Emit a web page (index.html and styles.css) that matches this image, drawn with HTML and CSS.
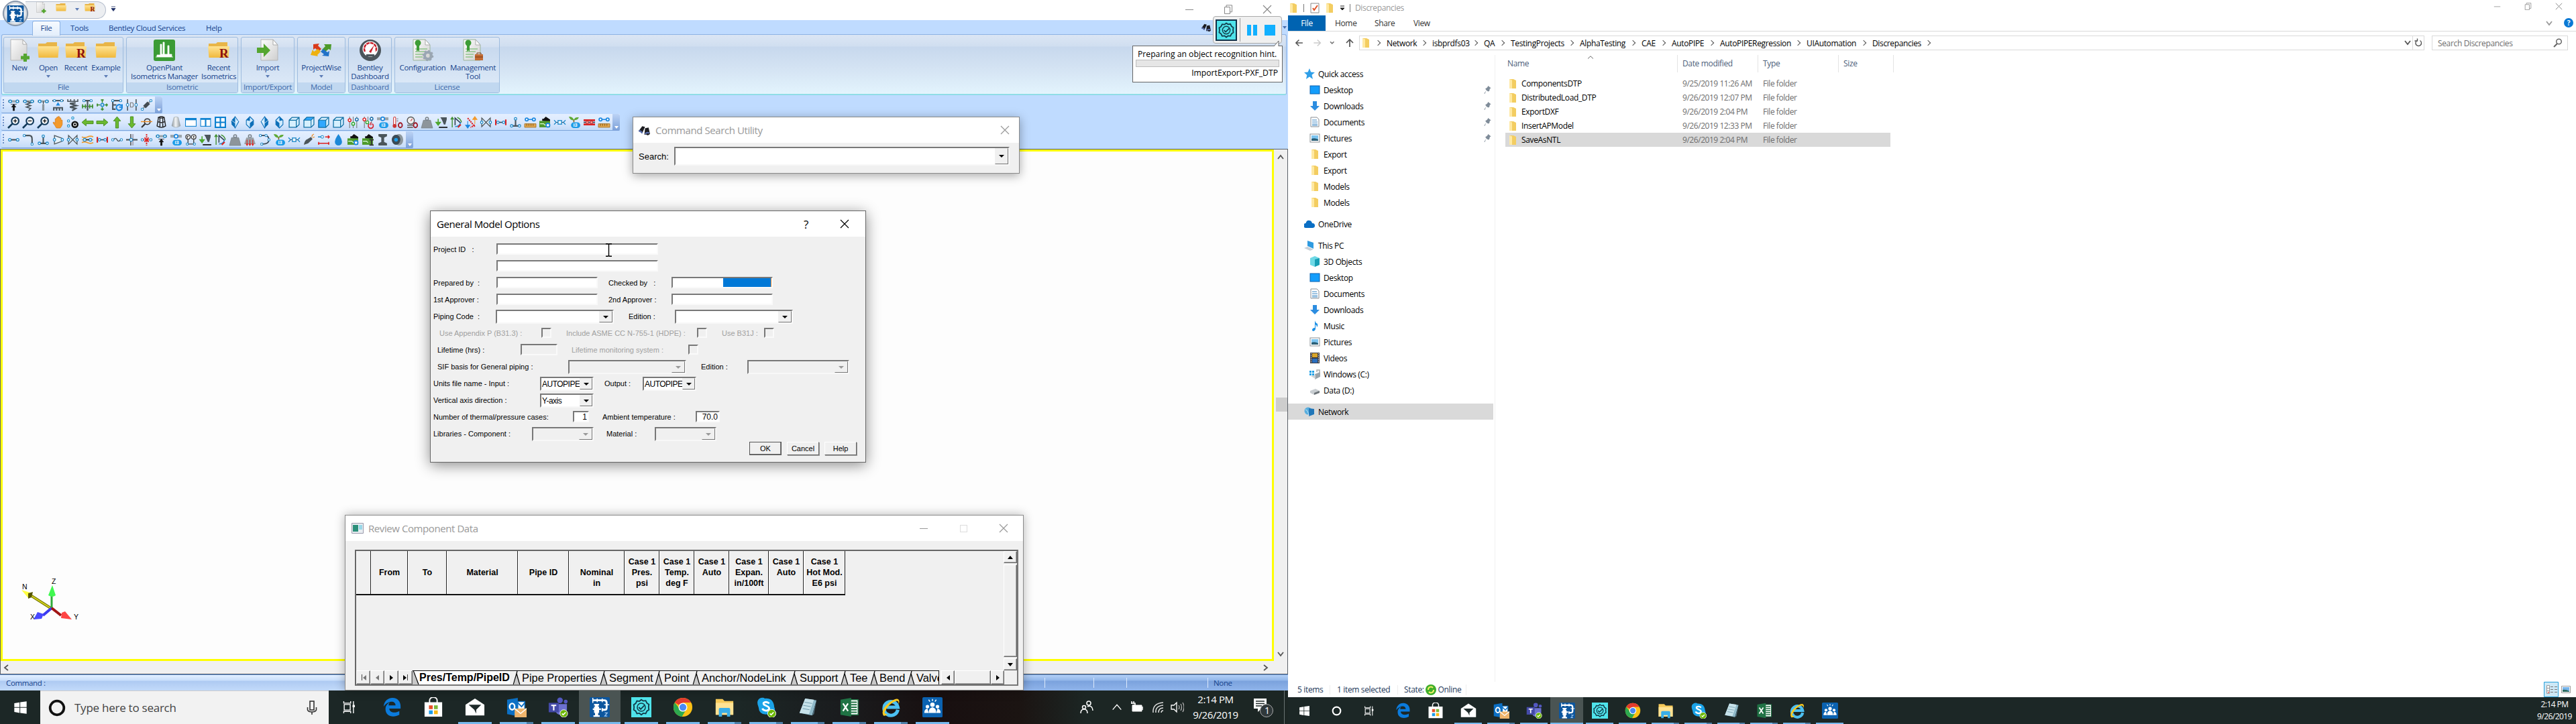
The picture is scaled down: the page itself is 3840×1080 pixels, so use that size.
FILE: index.html
```html
<!DOCTYPE html>
<html lang="en">
<head>
<meta charset="utf-8">
<title>Desktop</title>
<link rel="stylesheet" href="styles.css">
</head>
<body>
<svg class="defs" aria-hidden="true">
<defs>
<linearGradient id="g-folder" x1="0" y1="0" x2="0" y2="1"><stop offset="0" stop-color="#ffe394"/><stop offset="1" stop-color="#f0b93c"/></linearGradient>
<linearGradient id="g-page" x1="0" y1="0" x2="1" y2="1"><stop offset="0" stop-color="#fdfdfd"/><stop offset="1" stop-color="#cfcfcf"/></linearGradient>
<linearGradient id="g-cyl"><stop offset="0" stop-color="#8d979d"/><stop offset=".45" stop-color="#f4f6f7"/><stop offset="1" stop-color="#8d979d"/></linearGradient>
<radialGradient id="g-ring"><stop offset=".7" stop-color="#fff"/><stop offset=".9" stop-color="#c8ced6"/><stop offset="1" stop-color="#6f7f95"/></radialGradient>
</defs>
<!-- ribbon, 32 grid -->
<symbol id="page-new" viewBox="0 0 32 32"><path d="M3 0h18l6 7v24H3z" fill="url(#g-page)" stroke="#b5b5b5"/><path d="M21 0v7h6z" fill="#fff" stroke="#aaa"/><path d="M22 21h5v3.500h4v5h-4V33h-5v-3.500h-4v-5h4z" fill="#55a630"/></symbol>
<symbol id="folder" viewBox="0 0 32 32"><path d="M1 6h11l2-2h15v8H1z" fill="#e8b548"/><path d="M0 10h32l-1.500 17h-29z" fill="url(#g-folder)"/></symbol>
<symbol id="folder-r" viewBox="0 0 32 32"><path d="M1 6h11l2-2h15v8H1z" fill="#e8b548"/><path d="M0 10h32l-1.500 17h-29z" fill="url(#g-folder)"/><text x="17" y="27" font-family="Liberation Serif,serif" font-weight="bold" font-size="19" fill="#8b1010">R</text></symbol>
<symbol id="openplant" viewBox="0 0 32 32"><rect width="32" height="32" rx="3" fill="#3b9b35"/><path d="M3 26h26M5 26v-3h5V7h2v15h2V4h2v18h5V9h2v13h4v4" fill="#fff" stroke="#fff" stroke-width=".8"/></symbol>
<symbol id="import" viewBox="0 0 32 32"><path d="M6 0h18l7 8v23H6z" fill="url(#g-page)" stroke="#b5b5b5"/><path d="M24 0v8h7z" fill="#fff" stroke="#aaa"/><path d="M0 12h10V6l10 10-10 10v-6H0z" fill="#55a630"/></symbol>
<symbol id="projectwise" viewBox="0 0 32 32"><path d="M4 7l9-1-2 3 5 5-4 4-5-5-3 2z" fill="#d93a1b"/><path d="M31 7l-1 9-3-2-6 5-4-4 5-5-2-3z" fill="#4c9a2a"/><path d="M0 23l3-8 2 3 6-4 4 4-5 5 1 2z" fill="#eeb111"/><path d="M27 25l-10-1 3-2-5-4 4-4 6 5 3-2z" fill="#2172c8"/></symbol>
<symbol id="dash" viewBox="0 0 32 32"><circle cx="16" cy="16" r="16" fill="#4b555b"/><circle cx="16" cy="14" r="11.500" fill="#fff"/><path d="M8 18a9 9 0 1 1 16 0" fill="none" stroke="#c8202a" stroke-width="2.500" stroke-dasharray="5 1"/><path d="M14 18L22 8l-5 12z" fill="#c8202a"/><path d="M10 22h12v3H10z" fill="#4b555b"/></symbol>
<symbol id="license-cfg" viewBox="0 0 32 32"><path d="M2 0h18l7 8v23H2z" fill="url(#g-page)" stroke="#9bb59b"/><path d="M20 0v8h7z" fill="#fff" stroke="#aaa"/><path d="M5 14h18M5 18h15M5 22h12M5 26h11" stroke="#8fc48a" stroke-width="1.500"/><circle cx="9" cy="5" r="4.500" fill="#3d9d35"/><path d="M7 8h4v10l-2-2-2 2z" fill="#3d9d35"/><circle cx="24" cy="24" r="5" fill="none" stroke="#9aa6b3" stroke-width="4"/><circle cx="24" cy="24" r="7.300" fill="none" stroke="#9aa6b3" stroke-width="2" stroke-dasharray="3 2.700"/></symbol>
<symbol id="license-tool" viewBox="0 0 32 32"><path d="M2 0h18l7 8v23H2z" fill="url(#g-page)" stroke="#9bb59b"/><path d="M20 0v8h7z" fill="#fff" stroke="#aaa"/><path d="M5 14h18M5 18h15M5 22h12M5 26h11" stroke="#8fc48a" stroke-width="1.500"/><circle cx="9" cy="5" r="4.500" fill="#3d9d35"/><path d="M7 8h4v10l-2-2-2 2z" fill="#3d9d35"/><rect x="19" y="22" width="12" height="9" fill="#c26a32"/><path d="M22 22v-2h6v2M19 26h12" fill="none" stroke="#7a3a15"/></symbol>
<!-- engineering toolbars, 16 grid -->
<symbol id="t-anchor" viewBox="0 0 16 16"><path d="M0 3h16" stroke="#9aa5ab" stroke-width="3"/><g fill="#fff" stroke="#1c88c9" stroke-width="1.300"><circle cx="3" cy="3" r="1.800"/><circle cx="13" cy="3" r="1.800"/></g><path d="M4 7h8M8 7l3 4H9v5H7v-5H5z" fill="#111" stroke="#111" stroke-width=".7"/></symbol>
<symbol id="t-spring" viewBox="0 0 16 16"><path d="M0 3h16" stroke="#9aa5ab" stroke-width="3"/><path d="M6 3l5 2-6 2 6 2-6 2 6 2-3 3" fill="none" stroke="#4b555b" stroke-width="1.500"/><g fill="#fff" stroke="#1c88c9" stroke-width="1.300"><circle cx="3" cy="3" r="1.800"/><circle cx="13" cy="3" r="1.800"/></g></symbol>
<symbol id="t-rod" viewBox="0 0 16 16"><path d="M0 3h16" stroke="#9aa5ab" stroke-width="3"/><path d="M8 3v4" stroke="#333"/><path d="M8 7v9" stroke="#8d979d" stroke-width="3"/><g fill="#fff" stroke="#1c88c9" stroke-width="1.300"><circle cx="3" cy="3" r="1.800"/><circle cx="13" cy="3" r="1.800"/></g></symbol>
<symbol id="t-support" viewBox="0 0 16 16"><path d="M0 2h16" stroke="#4b555b" stroke-width="2"/><path d="M8 4l3 5H5z" fill="#1c88e0"/><path d="M1 12h14M2 12v4m4-4v4m4-4v4m4-4v4" stroke="#4b555b" stroke-width="2"/><g fill="#fff" stroke="#1c88c9"><circle cx="3" cy="2" r="1.600"/><circle cx="13" cy="2" r="1.600"/></g></symbol>
<symbol id="t-coil" viewBox="0 0 16 16"><path d="M1 0v3h14V0M5 0v3m5-3v3" fill="none" stroke="#4b555b" stroke-width="1.500"/><path d="M12 5L4 6l9 3-9 2 8 2-5 3" fill="none" stroke="#4b555b" stroke-width="2.200"/></symbol>
<symbol id="t-guide" viewBox="0 0 16 16"><path d="M1 2h14M8 2v14" stroke="#4b555b" stroke-width="2"/><path d="M0 10h7m2 0h7M1 7v6m4-6v6m6-6v6m4-6v6" stroke="#3f8f2f" stroke-width="1.500"/><g fill="#fff" stroke="#1c88c9"><circle cx="3" cy="2" r="1.600"/><circle cx="13" cy="2" r="1.600"/></g></symbol>
<symbol id="t-guide4" viewBox="0 0 16 16"><path d="M8 0v5m0 6v5M0 8h5m6 0h5M6 1h4M6 14h4M1 6v4M14 6v4" stroke="#3f8f2f" stroke-width="1.600"/><circle cx="8" cy="8" r="2" fill="#fff" stroke="#1c88c9" stroke-width="1.500"/></symbol>
<symbol id="t-rot" viewBox="0 0 16 16"><path d="M0 2h15M2 3v12M2 8h5M2 14h4" fill="none" stroke="#4b555b" stroke-width="2"/><path d="M14 9a4 4 0 1 0 1 3M15 7v4h-4" fill="none" stroke="#1c88e0" stroke-width="2"/><circle cx="2" cy="2" r="1.600" fill="#fff" stroke="#1c88c9"/><circle cx="13" cy="2" r="1.600" fill="#fff" stroke="#1c88c9"/></symbol>
<symbol id="t-gap" viewBox="0 0 16 16"><path d="M2 0v16M14 0v16" stroke="#4b555b" stroke-width="1.500"/><path d="M6 5h3l1 1v4l-1 1H6z" fill="none" stroke="#777"/><g fill="#fff" stroke="#1c88c9"><circle cx="2" cy="8" r="1.800"/><circle cx="14" cy="8" r="1.800"/></g></symbol>
<symbol id="t-damp" viewBox="0 0 16 16"><path d="M1 15L15 1" stroke="#888" stroke-width="1.500"/><path d="M5 11l6-6" stroke="#444c52" stroke-width="5"/><g fill="#fff" stroke="#1c88c9"><circle cx="2" cy="14" r="1.600"/><circle cx="14" cy="2" r="1.600"/></g></symbol>
<symbol id="t-zin" viewBox="0 0 16 16"><circle cx="10" cy="6" r="5" fill="#fff" stroke="#123a5a" stroke-width="2"/><path d="M6 10l-6 6" stroke="#123a5a" stroke-width="2.500"/><path d="M7.500 6h5M10 3.500v5" stroke="#111" stroke-width="1.300"/></symbol>
<symbol id="t-zout" viewBox="0 0 16 16"><circle cx="10" cy="6" r="5" fill="#fff" stroke="#123a5a" stroke-width="2"/><path d="M6 10l-6 6" stroke="#123a5a" stroke-width="2.500"/><path d="M7.500 6h5" stroke="#111" stroke-width="1.300"/></symbol>
<symbol id="t-hand" viewBox="0 0 16 16"><path d="M5 15C4 12 1 10 1 8q1-1 3 1V3q1-1 2 0V1q1-1 2 0V0q1-1 2 0v2q1-1 2 0v3q1-1 2 0v6q-1 3-3 5H6z" fill="#f39a2b" stroke="#cf6f10" stroke-width=".6"/></symbol>
<symbol id="t-dots" viewBox="0 0 16 16"><g fill="#dff" stroke="#1c88c9"><circle cx="2" cy="6" r="1.600"/><circle cx="8" cy="1.800" r="1.600"/><circle cx="2" cy="13" r="1.600"/></g><circle cx="11" cy="11" r="5" fill="#111"/><circle cx="11" cy="11" r="2" fill="#111" stroke="#fff"/></symbol>
<symbol id="t-arrow" viewBox="0 0 16 16"><path d="M0 8l6-5v3h10v4H6v3z" fill="#6bb92f" stroke="#3e8416" stroke-width=".8"/></symbol>
<symbol id="t-find" viewBox="0 0 16 16"><circle cx="9" cy="7" r="4" fill="none" stroke="#333" stroke-width="1.500"/><path d="M6 10l-5 5" stroke="#333" stroke-width="2"/><path d="M0 7h16" stroke="#ee8a1d" stroke-width="1.300"/></symbol>
<symbol id="t-wire" viewBox="0 0 16 16"><path d="M4 1L2 13q6 4 12 0L12 1Q8-1 4 1q4 2 8 0M3 7q5 3 10 0M6 2v13M10 2v13" fill="none" stroke="#222" stroke-width="1.300"/></symbol>
<symbol id="t-solid" viewBox="0 0 16 16"><path d="M5 1Q8-.5 11 1l3 12q-6 4-12 0z" fill="url(#g-cyl)" stroke="#8d979d" stroke-width=".5"/></symbol>
<symbol id="t-w1" viewBox="0 0 16 16"><rect x=".5" y="2.500" width="15" height="11" fill="#fff" stroke="#0b80d0"/><path d="M0 3.500h16" stroke="#0b80d0" stroke-width="3"/></symbol>
<symbol id="t-w2" viewBox="0 0 16 16"><rect x="1" y="2.500" width="14" height="11" fill="#fff" stroke="#0b80d0"/><path d="M1 3.500h14M8 4v10" stroke="#0b80d0" stroke-width="2"/></symbol>
<symbol id="t-w4" viewBox="0 0 16 16"><rect x="1" y="1" width="14" height="14" fill="#fff" stroke="#0b80d0" stroke-width="2"/><path d="M1 8h14M8 1v14" stroke="#0b80d0" stroke-width="2"/></symbol>
<symbol id="t-iso1" viewBox="0 0 16 16"><path d="M8 0l5 7-5 9-5-9z" fill="#cfeaff" stroke="#0d6fb8"/><path d="M8 0L3 5v6l5 5V9z" fill="#0d6fb8"/><path d="M3 5l5 4 5-4" fill="none" stroke="#fff" stroke-width=".7"/></symbol>
<symbol id="t-iso2" viewBox="0 0 16 16"><path d="M8 0l5 5v6l-5 5-5-5V5z" fill="#cfeaff" stroke="#0d6fb8"/><path d="M8 9l5-4v6l-5 5zM8 0L3 5l5 1z" fill="#0d6fb8"/></symbol>
<symbol id="t-cube" viewBox="0 0 16 16"><path d="M1 5l4-4h10v10l-4 4H1zM1 5h10v10M11 5l4-4" fill="#d6f0ff" stroke="#0e6ea3" stroke-width="1.200"/></symbol>
<symbol id="t-cubet" viewBox="0 0 16 16"><path d="M1 5l4-4h10v10l-4 4H1z" fill="#d6f0ff" stroke="#0e6ea3" stroke-width="1.200"/><path d="M1 5l4-4h10l-4 4z" fill="#31a8ff" stroke="#0e6ea3"/><path d="M11 5v10" stroke="#0e6ea3"/></symbol>
<symbol id="t-cubef" viewBox="0 0 16 16"><path d="M1 5l4-4h10v10l-4 4H1z" fill="#d6f0ff" stroke="#0e6ea3" stroke-width="1.200"/><path d="M1 5h10v10H1z" fill="#31a8ff" stroke="#0e6ea3"/><path d="M11 5l4-4" stroke="#0e6ea3"/></symbol>
<symbol id="t-slide" viewBox="0 0 16 16"><path d="M3 0v16M8 0v16M13 0v16" stroke="#777"/><g stroke-width="1.400" fill="#fff"><circle cx="3" cy="5" r="2" stroke="#d22"/><circle cx="8" cy="10" r="2" stroke="#3a3"/><circle cx="13" cy="4" r="2" stroke="#1c6fa9"/></g></symbol>
<symbol id="t-slidep" viewBox="0 0 16 16"><path d="M3 0v16M8 0v9M13 0v9" stroke="#777"/><g stroke-width="1.400" fill="#fff"><circle cx="3" cy="4" r="2" stroke="#d22"/><circle cx="7" cy="8" r="2" stroke="#3a3"/><circle cx="13" cy="3" r="2" stroke="#1c6fa9"/></g><path d="M10 10a3.500 3.500 0 1 0 4 0M12 8v4" fill="none" stroke="#d8202a" stroke-width="1.500"/></symbol>
<symbol id="t-info" viewBox="0 0 16 16"><path d="M0 3h16" stroke="#9aa5ab" stroke-width="4"/><circle cx="8" cy="3" r="2.500" fill="#fff" stroke="#1c88e0" stroke-width="1.600"/><rect x="3" y="8" width="13" height="8" rx="4" fill="#1c9be8"/><text x="6" y="14.500" font-family="Liberation Sans,sans-serif" font-weight="bold" font-size="7" fill="#fff">i3</text></symbol>
<symbol id="t-thermo" viewBox="0 0 16 16"><path d="M4 2v9" stroke="#c33" stroke-width="4" stroke-linecap="round"/><path d="M4 2v9" stroke="#fff" stroke-width="2" stroke-linecap="round"/><circle cx="4" cy="13" r="2.700" fill="#c33"/><ellipse cx="12" cy="12" rx="2.700" ry="3.300" fill="none" stroke="#a21d28" stroke-width="1.700"/><path d="M7 3h2M7 6h2" stroke="#777"/></symbol>
<symbol id="t-gauge" viewBox="0 0 16 16"><circle cx="6" cy="5.500" r="5" fill="#eee" stroke="#555" stroke-width="1.300"/><path d="M6 6l2-3" stroke="#c33"/><path d="M1 12h9M1 15h8" stroke="#777" stroke-width="2"/><ellipse cx="12.500" cy="12" rx="2.700" ry="3.300" fill="none" stroke="#a21d28" stroke-width="1.700"/></symbol>
<symbol id="t-weight" viewBox="0 0 16 16"><circle cx="8" cy="3" r="2" fill="none" stroke="#7a838a" stroke-width="1.500"/><path d="M3 5h10l3 11H0z" fill="#8d959b" stroke="#727a80" stroke-width=".6"/></symbol>
<symbol id="t-weightr" viewBox="0 0 16 16"><circle cx="8" cy="3" r="2" fill="none" stroke="#7a838a" stroke-width="1.500"/><path d="M3 5h10l3 9H0z" fill="#9aa1a7"/><path d="M4 8v8m4-8v8m4-8v8M2.500 13.500L4 16l1.500-2.500M6.500 13.500L8 16l1.500-2.500M10.500 13.500L12 16l1.500-2.500" fill="none" stroke="#d22"/></symbol>
<symbol id="t-force" viewBox="0 0 16 16"><path d="M6 1h9v3l-2 7h-2L8 4z" fill="#4b555b"/><path d="M3 3v7M0 8l3 4 3-4z" fill="#4ea72e" stroke="#4ea72e" stroke-width="1.500"/><path d="M4 15h12" stroke="#111" stroke-width="1.600"/></symbol>
<symbol id="t-swing" viewBox="0 0 16 16"><path d="M2 15V2M0 4l2-3 2 3M9 1q5 2 6 7" fill="none" stroke="#3f8f2f" stroke-width="1.300"/><path d="M6 12V2l8 7" fill="none" stroke="#345" stroke-width="1.500"/><path d="M6 14q6 0 8-6" fill="none" stroke="#1c88c9" stroke-width="1.300"/><path d="M10 15l4-4" stroke="#d22" stroke-width="2"/></symbol>
<symbol id="t-updn" viewBox="0 0 16 16"><path d="M3 6v8M0 12l3 4 3-4z" fill="#1c88e0" stroke="#1c88e0"/><path d="M13 10V3M10 4l3-4 3 4z" fill="#f39a2b" stroke="#f39a2b"/><path d="M3 2l10 12M13 12l-6 3" stroke="#d22" stroke-width="2" stroke-dasharray="2 1"/></symbol>
<symbol id="t-valve" viewBox="0 0 16 16"><path d="M2 2v12l12-12v12z" fill="#e6f2fb" stroke="#4b555b" stroke-width="1.200"/><g fill="#fff" stroke="#1c88c9" stroke-width="1.200"><circle cx="2" cy="8" r="1.700"/><circle cx="14" cy="8" r="1.700"/></g></symbol>
<symbol id="t-flexr" viewBox="0 0 16 16"><path d="M1 4v8M15 4v8" stroke="#d22" stroke-width="2"/><path d="M3 8h10" stroke="#345" stroke-width="1.500"/><g fill="#fff" stroke="#1c88c9" stroke-width="1.200"><circle cx="4" cy="8" r="1.700"/><circle cx="12" cy="8" r="1.700"/></g></symbol>
<symbol id="t-tee" viewBox="0 0 16 16"><path d="M8 3v9M2 13h12" stroke="#4b555b" stroke-width="2"/><g fill="#fff" stroke="#1c88c9" stroke-width="1.200"><circle cx="8" cy="3" r="1.700"/><circle cx="2.500" cy="13" r="1.700"/><circle cx="13.500" cy="13" r="1.700"/></g></symbol>
<symbol id="t-ruler" viewBox="0 0 16 16"><path d="M2 4h12" stroke="#1c88e0" stroke-width="1.500"/><g fill="#fff" stroke="#1c88e0" stroke-width="1.700"><circle cx="3" cy="4" r="2"/><circle cx="13" cy="4" r="2"/></g><path d="M0 10h16v5H0z" fill="#dfa650" stroke="#a5701d" stroke-width=".8"/><path d="M3 10v3m3-3v3m3-3v3m3-3v3" stroke="#7a5010" stroke-width=".8"/></symbol>
<symbol id="t-house" viewBox="0 0 16 16"><path d="M4 6V3h2l3-3 6 4v3z" fill="#111"/><path d="M0 6h15v9H0z" fill="#4e9a2c"/><path d="M1 10h5l2 2 3-2" fill="none" stroke="#dfd"/><circle cx="12" cy="12" r="2.600" fill="#fff" stroke="#1c88e0" stroke-width="1.700"/></symbol>
<symbol id="t-houseb" viewBox="0 0 16 16"><path d="M4 6V3h2l3-3 6 4v3z" fill="#111"/><path d="M0 6h15v9H0z" fill="#4e9a2c"/><path d="M1 10h5l2 2" fill="none" stroke="#dfd"/><path d="M10 8h6M13 8v8M10 15.500h6" stroke="#333" stroke-width="1.700"/></symbol>
<symbol id="t-flex" viewBox="0 0 16 16"><path d="M0 5l3 3-3 3M16 5l-3 3 3 3" fill="none" stroke="#1c88c9" stroke-width="1.200"/><path d="M3 8h10" stroke="#345"/><rect x="5.500" y="5.500" width="5" height="5" fill="#fff" stroke="#1c88c9" stroke-width="1.300"/></symbol>
<symbol id="t-plant" viewBox="0 0 16 16"><path d="M7 8V4" stroke="#8a5a20" stroke-width="1.500"/><path d="M7 5Q2 6 0 0q6 0 7 5q1-5 7-4-1 4-7 4" fill="#5faa36"/><rect x="3" y="8" width="13" height="8" rx="4" fill="#1c9be8"/><text x="6" y="14.500" font-family="Liberation Sans,sans-serif" font-weight="bold" font-size="7" fill="#fff">i3</text></symbol>
<symbol id="t-bundler" viewBox="0 0 16 16"><path d="M0 5h16M0 11h16" stroke="#d22" stroke-width="2.500"/><path d="M0 8h16" stroke="#345" stroke-width="1.500"/><g fill="#f99" stroke="#a33"><circle cx="5" cy="8" r="1.800"/><circle cx="11" cy="8" r="1.800"/></g></symbol>
<symbol id="t-bundleo" viewBox="0 0 16 16"><path d="M0 4q4 2 8 0t8 0M0 12q4-2 8 0t8 0M0 8h16" stroke="#ee9a2d" stroke-width="1.600" fill="none"/><g fill="#cfeaff" stroke="#1c88c9"><circle cx="4" cy="8" r="2"/><circle cx="12" cy="8" r="2"/></g><path d="M6 8h4" stroke="#222" stroke-width="1.500"/></symbol>
<symbol id="t-pipe" viewBox="0 0 16 16"><path d="M3 8h10" stroke="#4b555b" stroke-width="2"/><g fill="#fff" stroke="#1c88c9" stroke-width="1.200"><circle cx="2.500" cy="8" r="1.800"/><circle cx="13.500" cy="8" r="1.800"/></g></symbol>
<symbol id="t-bend" viewBox="0 0 16 16"><path d="M3 2h6q4 0 4 5v6" fill="none" stroke="#4b555b" stroke-width="2"/><g fill="#fff" stroke="#1c88c9"><circle cx="2" cy="2" r="1.600"/><circle cx="13" cy="14" r="1.600"/></g></symbol>
<symbol id="t-red" viewBox="0 0 16 16"><path d="M3 2l11 4v4L3 14z" fill="#e6f2fb" stroke="#4b555b" stroke-width="1.200"/><g fill="#fff" stroke="#1c88c9" stroke-width="1.200"><circle cx="3" cy="8" r="1.700"/><circle cx="14" cy="8" r="1.700"/></g></symbol>
<symbol id="t-wave" viewBox="0 0 16 16"><path d="M3 8q3-4 5 0t5 0" fill="none" stroke="#4b555b" stroke-width="1.400"/><g fill="#fff" stroke="#1c88c9"><circle cx="2" cy="8" r="1.600"/><circle cx="14" cy="8" r="1.600"/></g></symbol>
<symbol id="t-cross" viewBox="0 0 16 16"><path d="M6.500 0v16" stroke="#555" stroke-width="1.500"/><path d="M9.500 0v16" stroke="#aab" stroke-width="2"/><path d="M0 8h16" stroke="#4b555b" stroke-width="2"/><circle cx="7" cy="8" r="2" fill="#fff" stroke="#1c88c9"/></symbol>
<symbol id="t-crossr" viewBox="0 0 16 16"><path d="M8 0v16M0 8h16" stroke="#d22" stroke-width="1.800" stroke-dasharray="2 1"/><path d="M5 5l6 6m0-6l-6 6" stroke="#d22" stroke-width="1.500"/><g fill="#fff" stroke="#1c88c9"><circle cx="2" cy="8" r="1.600"/><circle cx="14" cy="8" r="1.600"/></g></symbol>
<symbol id="t-ft" viewBox="0 0 16 16"><path d="M4 6v8h8V6" fill="none" stroke="#444" stroke-width="1.300"/><g fill="#fff" stroke="#444" stroke-width="1.300"><circle cx="4" cy="4" r="3.200"/><circle cx="12" cy="4" r="3.200"/></g><path d="M3 6V3h2M11 3h2M12 3v3" stroke="#222" fill="none"/><g fill="#fff" stroke="#1c88c9"><circle cx="3" cy="14" r="1.500"/><circle cx="13" cy="14" r="1.500"/></g></symbol>
<symbol id="t-arc" viewBox="0 0 16 16"><path d="M2 2h6q6 0 6 6t-9 6" fill="none" stroke="#345" stroke-width="1.500"/><g fill="#fff" stroke="#1c88c9"><circle cx="2" cy="2" r="1.600"/><circle cx="10" cy="2" r="1.600"/><circle cx="14" cy="8" r="1.600"/><circle cx="4" cy="14" r="1.600"/></g></symbol>
<symbol id="t-cannon" viewBox="0 0 16 16"><path d="M1 15q1-7 5-8l5-3 2 3-6 6z" fill="#4b555b"/><path d="M12 4l1-3M13 5l3-1M12 2l3-2" stroke="#ee8a1d"/></symbol>
<symbol id="t-dim" viewBox="0 0 16 16"><path d="M0 4h7" stroke="#1c88c9" stroke-width="1.500"/><circle cx="6" cy="4" r="1.800" fill="#fff" stroke="#1c88c9"/><path d="M10 4h6M14 2l2 2-2 2M0 13h16M1 11v4M15 11v4" fill="none" stroke="#d22" stroke-width="1.400"/></symbol>
<symbol id="t-drop" viewBox="0 0 16 16"><path d="M8 0q5 7 5 11a5 5 0 0 1-10 0q0-4 5-11z" fill="#1c88d8"/></symbol>
<symbol id="t-beam" viewBox="0 0 16 16"><path d="M2 0h12v3l-4 2v6l4 2v3H2v-3l4-2V5L2 3z" fill="#4b555b"/></symbol>
<symbol id="t-cam" viewBox="0 0 16 16"><ellipse cx="10" cy="8" rx="6" ry="8" fill="#8d979d"/><ellipse cx="6" cy="8" rx="6" ry="7" fill="#3c4a54"/><circle cx="6" cy="8" r="2.600" fill="#1c9be8"/></symbol>
<!-- window chrome -->
<symbol id="x" viewBox="0 0 14 14"><path d="M1 1l12 12M13 1L1 13" stroke="currentColor" stroke-width="1.200"/></symbol>
<symbol id="min" viewBox="0 0 14 14"><path d="M1 7.500h12" stroke="currentColor"/></symbol>
<symbol id="restore" viewBox="0 0 14 14"><path d="M1.500 3.500h8v10h-8zM4 3V.8h8.500v10H10" fill="none" stroke="currentColor"/></symbol>
<symbol id="chev" viewBox="0 0 14 14"><path d="M3 4l4 5 4-5" fill="none" stroke="currentColor" stroke-width="1.800"/></symbol>
<symbol id="binoc" viewBox="0 0 18 16"><path d="M1 9l5-7 4 1-4 9zM9 14l1-9 5-1 2 9q-3 3-5 1" fill="#1c1c20"/><path d="M1 9q3-1 5 3M10 13q3-3 6-1" stroke="#5a6fb0" stroke-width="2" fill="none"/></symbol>
<!-- explorer -->
<symbol id="f-folder" viewBox="0 0 16 16"><path d="M3 1h6l4 2v12H3z" fill="#f3cd61"/><path d="M3 1l4 1.500V15H3z" fill="#ffe9a3"/></symbol>
<symbol id="f-star" viewBox="0 0 16 16"><path d="M8 0l2.200 5.500L16 6l-4.500 3.800L13 16l-5-3.500L3 16l1.300-6L0 6l5.600-.500z" fill="#2f9fe8"/></symbol>
<symbol id="f-desk" viewBox="0 0 16 16"><rect x="1" y="2" width="14" height="12" fill="#149dfb" stroke="#0b62b0"/></symbol>
<symbol id="f-down" viewBox="0 0 16 16"><path d="M5 1h6v7h4l-7 7-7-7h4z" fill="#2c8de0"/></symbol>
<symbol id="f-doc" viewBox="0 0 16 16"><path d="M2 1h9l3 3v11H2z" fill="#fff" stroke="#8a8f94"/><path d="M4 5h7M4 8h8M4 11h8M4 13h8" stroke="#3a87c4"/></symbol>
<symbol id="f-pic" viewBox="0 0 16 16"><rect x="1" y="2" width="14" height="12" fill="#fff" stroke="#8a8f94"/><path d="M3 4h10v8H3z" fill="#7cc4f0"/><path d="M3 9q5-2 10 1v2H3z" fill="#2b5f76"/></symbol>
<symbol id="f-cloud" viewBox="0 0 16 16"><path d="M3 14a3.500 3.500 0 0 1-.500-7Q4 2 8 3q3 0 4 4a3.500 3.500 0 0 1 1 7z" fill="#0b6fc4"/></symbol>
<symbol id="f-pc" viewBox="0 0 16 16"><path d="M5 1l9 3v9L5 9z" fill="#2f9be0"/><path d="M0 12l5-2 9 4-5 2z" fill="#c7d0d8"/></symbol>
<symbol id="f-3d" viewBox="0 0 16 16"><path d="M1 3l7-3 7 3v10l-7 3-7-3z" fill="#6fd9e6"/><path d="M8 5l7-2v10l-7 3z" fill="#169fb5"/></symbol>
<symbol id="f-music" viewBox="0 0 16 16"><path d="M8 0q1 4 4 5 1 3-1 5 0-3-2-4v7q-1 3-4 3-2-2 0-4 1-1 3-1z" fill="#1a8fe6"/></symbol>
<symbol id="f-video" viewBox="0 0 16 16"><path d="M1 0h14v16H1z" fill="#3a3a42"/><path d="M4 1h8v6H4z" fill="#d8a428"/><path d="M4 9h8v6H4z" fill="#2b6fc0"/><path d="M2.500 1v14M13.500 1v14" stroke="#eee" stroke-dasharray="1.500 1.500"/></symbol>
<symbol id="f-win" viewBox="0 0 16 16"><path d="M0 3h3v3H0zm4 0h3v3H4zM0 7h3v3H0zm4 0h3v3H4z" fill="#1a9fe6"/><path d="M8 8l8-3v7l-8 4z" fill="#9aa3aa"/><path d="M2 11l7-2v6z" fill="#ccd2d6"/><path d="M11 5V2h4v4" fill="none" stroke="#aaa" stroke-width="1.500"/></symbol>
<symbol id="f-disk" viewBox="0 0 16 16"><path d="M1 9l8-3 6 3v3l-8 3-6-3z" fill="#c8cdd1"/><path d="M7 12l8-3v3l-8 3z" fill="#6c7378"/></symbol>
<symbol id="f-net" viewBox="0 0 16 16"><circle cx="6" cy="7" r="5.500" fill="#58aede"/><path d="M7 3l8 1v8l-8 3z" fill="#2176b8"/><path d="M2 5q4 1 5 9" stroke="#bfe5fa" fill="none"/></symbol>
<symbol id="pin" viewBox="0 0 12 14"><path d="M7 0l5 4-2 1-1 4-2 1-3-2-3 6-1-1 4-5-2-3 2-1 2-2z" fill="#7f8c99"/></symbol>
<!-- taskbar, 32 grid -->
<symbol id="b-win" viewBox="0 0 32 32"><path d="M2 6l12-2v11H2zm13.500-2.200L30 2v13H15.500zM2 16.500h12V28L2 26zm13.500 0H30V30l-14.500-2z" fill="#fff"/></symbol>
<symbol id="b-cort" viewBox="0 0 32 32"><circle cx="16" cy="16" r="11" fill="none" stroke="currentColor" stroke-width="4"/></symbol>
<symbol id="b-task" viewBox="0 0 32 32"><path d="M6 10h13v12H6zM5 3v4h15V3M5 29v-4h15v4M26 3v26" fill="none" stroke="#fff" stroke-width="2"/><path d="M24 11h5v5h-5z" fill="#fff"/></symbol>
<symbol id="b-edge" viewBox="0 0 32 32"><path d="M3 15C4 5 11 1 17 1c9 0 13 7 13 13v4H12c1 8 11 7 16 4v6c-9 5-22 3-22-9 0-6 4-9 7-11-2 2-2 5-2 5h11c0-8-12-8-19 2z" fill="#0b7bdc"/></symbol>
<symbol id="b-store" viewBox="0 0 32 32"><path d="M10 9V5a6 5 0 0 1 12 0v4" fill="none" stroke="#fff" stroke-width="2"/><path d="M2 8h28v23H2z" fill="#fff"/><path d="M9 13h6v6H9z" fill="#e8502a"/><path d="M17 13h6v6h-6z" fill="#7db93a"/><path d="M9 21h6v6H9z" fill="#1c9be8"/><path d="M17 21h6v6h-6z" fill="#f8b916"/></symbol>
<symbol id="b-mail" viewBox="0 0 32 32"><path d="M1 12L16 2l15 10v17H1z" fill="#fff"/><path d="M6 12h20l-8 8v6l-3-6z" fill="#1e2a2a"/></symbol>
<symbol id="b-outlook" viewBox="0 0 32 32"><path d="M1 4l17-3v29L1 27z" fill="#0b6fc4"/><path d="M18 7h11v14H18z" fill="#fff" stroke="#0b6fc4" stroke-width="1.500"/><path d="M18 9l6 6 5-6" fill="none" stroke="#0b6fc4" stroke-width="2"/><ellipse cx="9" cy="15" rx="4" ry="5" fill="none" stroke="#fff" stroke-width="2.500"/><path d="M13 18h19v14H13z" fill="#efb56d"/><path d="M13 18l9.500 8 9.500-8" fill="none" stroke="#fff" stroke-width="1.500"/></symbol>
<symbol id="b-teams" viewBox="0 0 32 32"><circle cx="19" cy="5" r="4.500" fill="#5358c0"/><circle cx="28" cy="7" r="3" fill="#5358c0"/><path d="M12 11h18v9q-2 8-10 8t-8-8z" fill="#6c71d0"/><path d="M1 9h16v15H1z" fill="#444aa8"/><path d="M5 13h8M9 13v8" stroke="#fff" stroke-width="2.200"/><circle cx="25" cy="26" r="6" fill="#6bb700" stroke="#fff"/><path d="M22 26l2 2 4-4" fill="none" stroke="#fff" stroke-width="1.800"/></symbol>
<symbol id="b-pipe" viewBox="0 0 32 32"><rect width="32" height="32" rx="2" fill="#0d569e"/><g fill="none" stroke="#fff"><path d="M5 5h18q4 0 4 4v8q0 3-3 3h-5" stroke-width="3"/><path d="M5 1v8M12 2v6M20 2v6M23 12h8M20 17v6" stroke-width="1.600"/><path d="M11 11v19" stroke-width="5"/><path d="M7 12h8M5 19h13M6 30h10" stroke-width="2.500"/></g><path d="M7 15h8v10H7z" fill="#fff"/><path d="M24 25h4l-4 5h4" fill="none" stroke="#9cc4ee" stroke-width="1.400"/></symbol>
<symbol id="b-test" viewBox="0 0 32 32"><rect width="32" height="32" fill="#4fe3ea"/><path d="M16 4l3 2 4-.500 2 4 3 2-.500 4L28 20l-3 2-2 4-4-.500-3 2.500-3-2.500-4 .500-2-4-3-2 .500-4-.500-4 3-2 2-4 4 .500z" fill="none" stroke="#123b4a" stroke-width="2"/><circle cx="16" cy="16" r="6.500" fill="none" stroke="#123b4a" stroke-width="1.600"/><path d="M12 16l3 3 6-6" fill="none" stroke="#123b4a" stroke-width="2"/></symbol>
<symbol id="b-chrome" viewBox="0 0 32 32"><circle cx="16" cy="16" r="15" fill="#fbc116"/><path d="M16 16L3 8.500A15 15 0 0 1 29 8.500H16z" fill="#e23b2e"/><path d="M3 8.500A15 15 0 0 0 14.500 31L21 20l-10-1z" fill="#2da94f"/><circle cx="16" cy="16" r="7" fill="#fff"/><circle cx="16" cy="16" r="5.500" fill="#4a8af4"/></symbol>
<symbol id="b-expl" viewBox="0 0 32 32"><path d="M2 3h11l3 3h14v22H2z" fill="#f5c959"/><path d="M2 9h28v19H2z" fill="#ffe293"/><path d="M7 31V19q0-2 2-2h14q2 0 2 2v12h-5v-6h-8v6z" fill="#3aaee8"/></symbol>
<symbol id="b-skype" viewBox="0 0 32 32"><path d="M8 1q4-1 6 1 14-1 15 14 2 4 0 7-3 5-8 4Q5 30 4 16-1 4 8 1z" fill="#1ba3e8"/><path d="M21 10q-4-4-9-1c-2 5 9 4 9 9-1 5-9 4-11 0" fill="none" stroke="#fff" stroke-width="3"/><circle cx="25" cy="26" r="6.500" fill="#6bb700" stroke="#fff"/><path d="M22 26l2 2 4-4" fill="none" stroke="#fff" stroke-width="1.800"/></symbol>
<symbol id="b-note" viewBox="0 0 32 32"><path d="M12 2l18 3-7 24-20-4z" fill="#8fb9c8"/><path d="M12 2l14 2-8 23-15-2z" fill="#c7e2ea"/><path d="M11 8l12 2M9 13l12 2M8 18l11 2" stroke="#6c98a8"/><path d="M30 5l-4 22-3 2z" fill="#4d6a78"/></symbol>
<symbol id="b-excel" viewBox="0 0 32 32"><path d="M16 4h14v24H16z" fill="#fff" stroke="#1f7244" stroke-width="1.500"/><path d="M19 8h9M19 12h9M19 16h9M19 20h9M19 24h9" stroke="#1f7244" stroke-width="2"/><path d="M2 4l17-3v30L2 28z" fill="#1f7244"/><path d="M6 10l8 12M14 10L6 22" stroke="#fff" stroke-width="2.400"/></symbol>
<symbol id="b-ie" viewBox="0 0 32 32"><path d="M27 20A11 11 0 1 1 27 16H9" fill="none" stroke="#4cc0f2" stroke-width="5.500"/><path d="M4 29Q-1 20 14 8 27-1 29 5q1 3-1 6 1-6-4-5Q12 10 6 24q0 3 5 3-5 4-7 2z" fill="#f9c920"/></symbol>
<symbol id="b-people" viewBox="0 0 32 32"><rect width="32" height="32" rx="2" fill="#0b62b0"/><g fill="#fff"><circle cx="16" cy="12" r="3.500"/><path d="M10 25q0-8 6-9 6 1 6 9z"/><circle cx="8" cy="15" r="2.800"/><path d="M3 25q0-6 5-7l2 7zM29 25q0-6-5-7l-2 7z"/><circle cx="24" cy="15" r="2.800"/></g><path d="M16 3v3M10 4l2 3M22 4l-2 3" stroke="#fff" stroke-width="1.500"/></symbol>
</svg>

<div class="desktop">
<!-- ================= left monitor ================= -->
<section class="monitor">
<div class="app">
  <div class="app-title">
    <div class="qat">
      <svg class="i16"><use href="#page-new"/></svg><svg class="i16 q2"><use href="#folder"/></svg><svg class="dd"><path d="M0 0h6L3 4z"/></svg><svg class="i16"><use href="#folder-r"/></svg>
    </div>
    <svg class="qat-more" viewBox="0 0 8 8"><path d="M1 1h6M1 3.500h6L4 7.500z" fill="#1e2f66" stroke="#1e2f66" stroke-width=".8"/></svg>
    <div class="app-ctl"><svg class="i14"><use href="#min"/></svg><svg class="i14"><use href="#restore"/></svg><svg class="i14"><use href="#x"/></svg></div>
  </div>
  <svg class="orb" viewBox="0 0 38 38"><circle cx="19" cy="19" r="18.500" fill="url(#g-ring)" stroke="#7588a0"/><use href="#b-pipe" x="6" y="7" width="26" height="25"/></svg>
  <div class="menu"><span class="tab on">File</span><span class="tab t2">Tools</span><span class="tab t3">Bentley Cloud Services</span><span class="tab t4">Help</span><svg class="menu-bin"><use href="#binoc"/></svg><svg class="menu-dd" viewBox="0 0 6 4"><path d="M0 0h6L3 4z" fill="#4870b0"/></svg></div>
  <div class="ribbon">
    <div class="grp g-file"><div class="items">
      <div class="it a"><svg><use href="#page-new"/></svg><span>New</span></div>
      <div class="it b"><svg><use href="#folder"/></svg><span>Open</span><i class="tri"></i></div>
      <div class="it c"><svg><use href="#folder-r"/></svg><span>Recent</span></div>
      <div class="it d"><svg><use href="#folder"/></svg><span>Example</span><i class="tri"></i></div>
    </div><div class="cap">File</div></div>
    <div class="grp g-iso"><div class="items">
      <div class="it e"><svg><use href="#openplant"/></svg><span>OpenPlant<br>Isometrics Manager</span></div>
      <div class="it f"><svg><use href="#folder-r"/></svg><span>Recent<br>Isometrics</span></div>
    </div><div class="cap">Isometric</div></div>
    <div class="grp g-imp"><div class="items"><div class="it full"><svg><use href="#import"/></svg><span>Import</span><i class="tri"></i></div></div><div class="cap">Import/Export</div></div>
    <div class="grp g-mod"><div class="items"><div class="it full"><svg><use href="#projectwise"/></svg><span>ProjectWise</span><i class="tri"></i></div></div><div class="cap">Model</div></div>
    <div class="grp g-dash"><div class="items"><div class="it full"><svg><use href="#dash"/></svg><span>Bentley<br>Dashboard</span></div></div><div class="cap">Dashboard</div></div>
    <div class="grp g-lic"><div class="items">
      <div class="it g"><svg><use href="#license-cfg"/></svg><span>Configuration</span></div>
      <div class="it h"><svg><use href="#license-tool"/></svg><span>Management<br>Tool</span></div>
    </div><div class="cap">License</div></div>
  </div>
  <div class="bars">
    <div class="bar"><i class="grip"></i><svg><use href="#t-anchor"/></svg><svg><use href="#t-spring"/></svg><svg><use href="#t-rod"/></svg><svg><use href="#t-support"/></svg><svg><use href="#t-coil"/></svg><svg><use href="#t-guide"/></svg><svg><use href="#t-guide4"/></svg><svg><use href="#t-rot"/></svg><svg><use href="#t-gap"/></svg><svg><use href="#t-damp"/></svg><i class="end"></i></div>
    <div class="bar"><i class="grip"></i><svg><use href="#t-zin"/></svg><svg><use href="#t-zout"/></svg><svg><use href="#t-zin"/></svg><svg><use href="#t-hand"/></svg><svg><use href="#t-dots"/></svg><svg><use href="#t-arrow"/></svg><svg class="r180"><use href="#t-arrow"/></svg><svg class="r90"><use href="#t-arrow"/></svg><svg class="r270"><use href="#t-arrow"/></svg><svg><use href="#t-find"/></svg><svg><use href="#t-wire"/></svg><svg><use href="#t-solid"/></svg><svg><use href="#t-w1"/></svg><svg><use href="#t-w2"/></svg><svg><use href="#t-w4"/></svg><svg><use href="#t-iso1"/></svg><svg><use href="#t-iso2"/></svg><svg class="flip"><use href="#t-iso1"/></svg><svg class="flip"><use href="#t-iso2"/></svg><svg><use href="#t-cube"/></svg><svg><use href="#t-cubet"/></svg><svg><use href="#t-cubef"/></svg><svg><use href="#t-cube"/></svg><svg><use href="#t-slide"/></svg><svg><use href="#t-slidep"/></svg><svg><use href="#t-info"/></svg><svg><use href="#t-thermo"/></svg><svg><use href="#t-gauge"/></svg><svg><use href="#t-weight"/></svg><svg><use href="#t-force"/></svg><svg><use href="#t-swing"/></svg><svg><use href="#t-updn"/></svg><svg><use href="#t-valve"/></svg><svg><use href="#t-flexr"/></svg><svg><use href="#t-tee"/></svg><svg><use href="#t-ruler"/></svg><svg><use href="#t-house"/></svg><svg><use href="#t-flex"/></svg><svg><use href="#t-plant"/></svg><svg><use href="#t-bundler"/></svg><svg><use href="#t-ruler"/></svg><i class="end"></i></div>
    <div class="bar"><i class="grip"></i><svg><use href="#t-pipe"/></svg><svg><use href="#t-bend"/></svg><svg><use href="#t-tee"/></svg><svg><use href="#t-red"/></svg><svg><use href="#t-valve"/></svg><svg><use href="#t-bundleo"/></svg><svg><use href="#t-flexr"/></svg><svg><use href="#t-wave"/></svg><svg><use href="#t-cross"/></svg><svg><use href="#t-crossr"/></svg><svg><use href="#t-anchor"/></svg><svg><use href="#t-info"/></svg><svg><use href="#t-ft"/></svg><svg><use href="#t-force"/></svg><svg><use href="#t-swing"/></svg><svg><use href="#t-weight"/></svg><svg><use href="#t-weightr"/></svg><svg><use href="#t-arc"/></svg><svg><use href="#t-plant"/></svg><svg><use href="#t-flex"/></svg><svg><use href="#t-cannon"/></svg><svg><use href="#t-dim"/></svg><svg><use href="#t-drop"/></svg><svg><use href="#t-house"/></svg><svg><use href="#t-houseb"/></svg><svg><use href="#t-beam"/></svg><svg><use href="#t-cam"/></svg><i class="end"></i></div>
  </div>
  <div class="view">
    <div class="canvas">
      <svg class="triad" width="120" height="80" viewBox="0 0 120 80">
        <g font-family="Liberation Sans,sans-serif" font-size="10.500"><text x="27" y="19">N</text><text x="71" y="11">Z</text><text x="39" y="64">X</text><text x="104" y="64">Y</text></g>
        <path d="M71 48L38 27" stroke="#777700" stroke-width="4"/><path d="M71 48L38 27" stroke="#d8d820" stroke-width="1.600"/><path d="M26 20l13 4-3 8z" fill="#ffff40"/><path d="M36 25l7-2-2 8-5 2z" fill="#555500"/>
        <path d="M71 47V29" stroke="#2faa3a" stroke-width="3"/><path d="M72 13l5 15q-5 4-11 0z" fill="#40f850"/>
        <path d="M71 47L58 58" stroke="#3a3af0" stroke-width="4"/><path d="M44 64l6-11 9 3-3 7z" fill="#4848ff"/>
        <path d="M71 47l14 11" stroke="#a01515" stroke-width="4"/><path d="M101 64l-16-2 1-8 5-2z" fill="#ff4444"/>
      </svg>
    </div>
    <div class="vs"><svg class="i14"><use href="#chev"/></svg><i class="thumb"></i><svg class="i14"><use href="#chev"/></svg></div>
  </div>
  <div class="hs"><svg class="i14 r90"><use href="#chev"/></svg><svg class="i14 r270"><use href="#chev"/></svg></div>
  <div class="status"><span>Command :</span><div class="status-r"><i></i><i></i><i></i><i></i><span>None</span></div></div>
</div>

<div class="win search-win">
  <header><svg class="bin"><use href="#binoc"/></svg><span>Command Search Utility</span><svg class="i14 close"><use href="#x"/></svg></header>
  <div class="sw-body"><label>Search:</label><div class="combo"><b></b></div></div>
</div>

<div class="win gmo">
  <header><span>General Model Options</span><em>?</em><svg class="i14"><use href="#x"/></svg></header>
  <div class="form">
    <div class="row r1"><label>Project ID&nbsp;&nbsp; :</label><div class="fld"></div></div>
    <div class="row r1"><label></label><div class="fld"></div></div>
    <div class="row r3"><label>Prepared by&nbsp; :</label><div class="fld"></div><label>Checked by&nbsp;&nbsp; :</label><div class="fld"><i class="sel"></i></div></div>
    <div class="row r3"><label>1st Approver :</label><div class="fld"></div><label>2nd Approver :</label><div class="fld"></div></div>
    <div class="row r5"><label>Piping Code&nbsp; :</label><div class="combo"><b></b></div><label>Edition :</label><div class="combo"><b></b></div></div>
    <div class="row r6 off"><label>Use Appendix P (B31.3) :</label><div class="chk"></div><label>Include ASME CC N-755-1 (HDPE) :</label><div class="chk"></div><label>Use B31J :</label><div class="chk"></div></div>
    <div class="row r7"><label>Lifetime (hrs) :</label><div class="fld dis"></div><label class="off">Lifetime monitoring system :</label><div class="chk"></div></div>
    <div class="row r8"><label>SIF basis for General piping :</label><div class="combo dis"><b></b></div><label>Edition :</label><div class="combo dis"><b></b></div></div>
    <div class="row r9"><label>Units file name - Input :</label><div class="combo">AUTOPIPE<b></b></div><label>Output :</label><div class="combo">AUTOPIPE<b></b></div></div>
    <div class="row r9"><label>Vertical axis direction :</label><div class="combo">Y-axis<b></b></div></div>
    <div class="row r11"><label>Number of thermal/pressure cases:</label><div class="fld num">1</div><label>Ambient temperature :</label><div class="fld num">70.0</div></div>
    <div class="row r12"><label>Libraries - Component :</label><div class="combo dis"><b></b></div><label>Material :</label><div class="combo dis"><b></b></div></div>
    <div class="btns"><button class="ok">OK</button><button>Cancel</button><button>Help</button></div>
  </div>
  <svg class="ibeam" viewBox="0 0 9 20"><path d="M0 .8h3.500l1 1 1-1H9M0 19.200h3.500l1-1 1 1H9M4.500 1v18" fill="none" stroke="#000" stroke-width="1.400"/></svg>
</div>

<div class="win rcd">
  <header><svg class="rcd-ic" viewBox="0 0 18 16"><path d="M.5.5h17v15H.5z" fill="#e9eef2" stroke="#99a"/><path d="M2 3h8v10H2z" fill="#2b8f7a"/><path d="M11 3h5v7h-5z" fill="#9ad8e8"/></svg><span>Review Component Data</span><svg class="i14 rcd-min"><use href="#min"/></svg><i class="maxbox"></i><svg class="i14 rcd-x"><use href="#x"/></svg></header>
  <div class="sheet">
    <div class="sheet-main">
      <div class="cols"><div></div><div>From</div><div>To</div><div>Material</div><div>Pipe ID</div><div>Nominal<br>in</div><div>Case 1<br>Pres.<br>psi</div><div>Case 1<br>Temp.<br>deg F</div><div>Case 1<br>Auto<br>&nbsp;</div><div>Case 1<br>Expan.<br>in/100ft</div><div>Case 1<br>Auto<br>&nbsp;</div><div>Case 1<br>Hot Mod.<br>E6 psi</div></div>
      <div class="svs"><i class="btn"><s class="up"></s></i><i class="btn th"></i><i class="btn"><s class="dn"></s></i></div>
    </div>
    <div class="tabs">
      <i class="btn nav g"><u></u><s class="lf"></s></i><i class="btn nav g"><s class="lf"></s></i><i class="btn nav"><s class="rt"></s></i><i class="btn nav"><s class="rt"></s><u></u></i>
      <div class="tabtxt">
        <svg class="sl first" viewBox="0 0 10 21"><path d="M0 0l9 21H0z" fill="#c8c8c8"/><path d="M1 0l8 21" stroke="#000" stroke-width="1.200"/></svg><b class="w1">Pres/Temp/PipeID</b>
        <svg class="sl" viewBox="0 0 18 21"><path d="M6 21L11 2l4 19z" fill="#c8c8c8"/><path d="M5 21L11 0M10 4l5 17" stroke="#000" stroke-width="1.200"/></svg><span class="w2">Pipe Properties</span>
        <svg class="sl" viewBox="0 0 18 21"><path d="M6 21L11 2l4 19z" fill="#c8c8c8"/><path d="M5 21L11 0M10 4l5 17" stroke="#000" stroke-width="1.200"/></svg><span class="w3">Segment</span>
        <svg class="sl" viewBox="0 0 18 21"><path d="M6 21L11 2l4 19z" fill="#c8c8c8"/><path d="M5 21L11 0M10 4l5 17" stroke="#000" stroke-width="1.200"/></svg><span class="w4">Point</span>
        <svg class="sl" viewBox="0 0 18 21"><path d="M6 21L11 2l4 19z" fill="#c8c8c8"/><path d="M5 21L11 0M10 4l5 17" stroke="#000" stroke-width="1.200"/></svg><span class="w5">Anchor/NodeLink</span>
        <svg class="sl" viewBox="0 0 18 21"><path d="M6 21L11 2l4 19z" fill="#c8c8c8"/><path d="M5 21L11 0M10 4l5 17" stroke="#000" stroke-width="1.200"/></svg><span class="w6">Support</span>
        <svg class="sl" viewBox="0 0 18 21"><path d="M6 21L11 2l4 19z" fill="#c8c8c8"/><path d="M5 21L11 0M10 4l5 17" stroke="#000" stroke-width="1.200"/></svg><span class="w7">Tee</span>
        <svg class="sl" viewBox="0 0 18 21"><path d="M6 21L11 2l4 19z" fill="#c8c8c8"/><path d="M5 21L11 0M10 4l5 17" stroke="#000" stroke-width="1.200"/></svg><span class="w8">Bend</span>
        <svg class="sl" viewBox="0 0 18 21"><path d="M6 21L11 2l4 19z" fill="#c8c8c8"/><path d="M5 21L11 0M10 4l5 17" stroke="#000" stroke-width="1.200"/></svg><span>Valve</span>
      </div>
      <i class="btn h1"><s class="lf"></s></i><i class="btn h2"></i><i class="btn h1"><s class="rt"></s></i>
    </div>
  </div>
</div>

<div class="recorder"><svg class="rec-main"><use href="#b-test"/></svg><i class="rule"></i><svg class="rec-p" viewBox="0 0 42 16"><path d="M0 0h6v16H0zm9 0h6v16H9zm17 0h16v16H26z" fill="#12b0ff"/></svg></div>
<div class="hint"><span>Preparing an object recognition hint.</span><div class="prog"></div><span class="job">ImportExport-PXF_DTP</span><svg class="tip" viewBox="0 0 8 8"><path d="M0 8L7 0v8" fill="#fff" stroke="#666"/></svg></div>

<footer class="task big">
  <div class="cell st"><svg><use href="#b-win"/></svg></div>
  <div class="srch"><svg class="ct"><use href="#b-cort"/></svg><span>Type here to search</span><svg class="mic" viewBox="0 0 16 22"><rect x="5" y="1" width="6" height="13" fill="none" stroke="#333" stroke-width="1.600"/><path d="M1.500 10v4q1 3 6.500 3t6.500-3v-4M8 17v4" fill="none" stroke="#333" stroke-width="1.600"/></svg></div>
  <div class="cell tv"><svg><use href="#b-task"/></svg></div>
  <div class="cell"><svg><use href="#b-edge"/></svg></div><div class="cell"><svg><use href="#b-store"/></svg></div><div class="cell run"><svg><use href="#b-mail"/></svg></div><div class="cell run many"><svg><use href="#b-outlook"/></svg></div><div class="cell run"><svg><use href="#b-teams"/></svg></div><div class="cell run act"><svg><use href="#b-pipe"/></svg></div><div class="cell run"><svg><use href="#b-test"/></svg></div><div class="cell run"><svg><use href="#b-chrome"/></svg></div><div class="cell run many"><svg><use href="#b-expl"/></svg></div><div class="cell run many"><svg><use href="#b-skype"/></svg></div><div class="cell run many"><svg><use href="#b-note"/></svg></div><div class="cell run many"><svg><use href="#b-excel"/></svg></div><div class="cell run many"><svg><use href="#b-ie"/></svg></div><div class="cell run"><svg><use href="#b-people"/></svg></div>
  <div class="tray">
    <svg viewBox="0 0 20 20"><g fill="none" stroke="#fff" stroke-width="1.500"><circle cx="6" cy="10" r="2.500"/><path d="M1 19q0-6 5-6t5 6"/><circle cx="13" cy="4" r="3"/><path d="M11 9q7-3 8 6"/></g></svg>
    <svg class="k1" viewBox="0 0 20 20"><path d="M3 14l7-8 7 8" fill="none" stroke="#fff" stroke-width="1.500"/></svg>
    <svg class="k2" viewBox="0 0 20 20"><path d="M3 7h14v9H3z" fill="#fff" stroke="#fff"/><path d="M18 9v5M2 1v4M5 1v4M1 4h6v3H4v3" fill="none" stroke="#fff" stroke-width="1.500"/></svg>
    <svg class="k3" viewBox="0 0 20 20"><g fill="none" stroke="#ddd" stroke-width="1.500"><path d="M3 18Q2 4 18 3M7 18Q6 8 18 7M11 18q0-7 7-7M15 18q0-3 3-3"/></g></svg>
    <svg class="k4" viewBox="0 0 20 20"><path d="M1 7h4l4-4v14l-4-4H1z" fill="none" stroke="#fff" stroke-width="1.300"/><path d="M12 7q2 3 0 6M15 5q3 5 0 10M18 3q4 7 0 14" fill="none" stroke="#bbb" stroke-width="1.200"/></svg>
    <div class="clk">2:14 PM<br>9/26/2019</div>
    <svg class="ac" viewBox="0 0 30 32"><path d="M1 3h19v15h-8l-5 5v-5H1z" fill="#fff"/><path d="M4 7h13M4 10.500h13M4 14h9" stroke="#1c2726" stroke-width="1.500"/><circle cx="20" cy="21" r="9.500" fill="#30383a" stroke="#aaa"/><text x="17" y="26" font-family="Open Sans,sans-serif" font-size="14" fill="#fff">1</text></svg>
    <i class="peek"></i>
  </div>
</footer>
</section>

<!-- ================= right monitor ================= -->
<section class="monitor">
<div class="exp">
  <div class="e-title"><svg class="i16"><use href="#f-folder"/></svg><i class="bar1"></i><svg class="i16 e-chk" viewBox="0 0 16 16"><path d="M2 1h12v14H2z" fill="#fff" stroke="#888"/><path d="M5 8l2 3 5-7" fill="none" stroke="#e0562a" stroke-width="2"/></svg><svg class="i16 e-fol"><use href="#f-folder"/></svg><svg class="i8" viewBox="0 0 8 8"><path d="M1 1h6M1 4h6L4 7z" stroke="#222" fill="#222"/></svg><i class="bar1 k"></i><span>Discrepancies</span>
    <div class="e-ctl"><svg class="i11"><use href="#min"/></svg><svg class="i11"><use href="#restore"/></svg><svg class="i11"><use href="#x"/></svg></div></div>
  <div class="e-menu"><b>File</b><span class="m1">Home</span><span class="m2">Share</span><span class="m3">View</span><svg class="i14 mc"><use href="#chev"/></svg><em>?</em></div>
  <div class="e-addr">
    <svg class="nv" viewBox="0 0 92 16"><g fill="none" stroke-width="1.700"><path d="M24 8H13M18 3l-5 5 5 5" stroke="#555"/><path d="M42 8h11M48 3l5 5-5 5" stroke="#ccc"/><path d="M69 6l3 3 3-3" stroke="#777"/></g></svg><svg class="nv-up" viewBox="0 0 12 16"><path d="M6 14V3M1 8l5-5 5 5" fill="none" stroke="#555" stroke-width="1.700"/></svg>
    <div class="crumbs"><svg class="i16"><use href="#f-folder"/></svg>
      <i></i><span class="c1">Network</span><i></i><span class="c2">isbprdfs03</span><i></i><span class="c3">QA</span><i></i><span class="c4">TestingProjects</span><i></i><span class="c5">AlphaTesting</span><i></i><span class="c6">CAE</span><i></i><span class="c7">AutoPIPE</span><i></i><span class="c8">AutoPIPERegression</span><i></i><span class="c9">UIAutomation</span><i></i><span class="c10">Discrepancies</span><i></i>
      <svg class="i14 cd"><use href="#chev"/></svg><svg class="rf" viewBox="0 0 17 20"><path d="M.5 0v20" stroke="#ddd"/><path d="M11.500 6.500A4.300 4.300 0 1 1 7 6.500M7.500 3.500v3.500h-4" fill="none" stroke="#555" stroke-width="1.400"/></svg></div>
    <div class="e-search"><span>Search Discrepancies</span><svg viewBox="0 0 14 14"><circle cx="8.500" cy="5" r="3.800" fill="none" stroke="#666" stroke-width="1.500"/><path d="M6 8l-5 5" stroke="#666" stroke-width="2"/></svg></div>
  </div>
  <div class="e-main">
    <nav>
      <div class="n l1"><svg><use href="#f-star"/></svg>Quick access</div>
      <div class="n"><svg><use href="#f-desk"/></svg>Desktop<svg class="pin"><use href="#pin"/></svg></div>
      <div class="n"><svg><use href="#f-down"/></svg>Downloads<svg class="pin"><use href="#pin"/></svg></div>
      <div class="n"><svg><use href="#f-doc"/></svg>Documents<svg class="pin"><use href="#pin"/></svg></div>
      <div class="n"><svg><use href="#f-pic"/></svg>Pictures<svg class="pin"><use href="#pin"/></svg></div>
      <div class="n"><svg><use href="#f-folder"/></svg>Export</div>
      <div class="n"><svg><use href="#f-folder"/></svg>Export</div>
      <div class="n"><svg><use href="#f-folder"/></svg>Models</div>
      <div class="n"><svg><use href="#f-folder"/></svg>Models</div>
      <div class="n l1 sp"><svg><use href="#f-cloud"/></svg>OneDrive</div>
      <div class="n l1 sp"><svg><use href="#f-pc"/></svg>This PC</div>
      <div class="n"><svg><use href="#f-3d"/></svg>3D Objects</div>
      <div class="n"><svg><use href="#f-desk"/></svg>Desktop</div>
      <div class="n"><svg><use href="#f-doc"/></svg>Documents</div>
      <div class="n"><svg><use href="#f-down"/></svg>Downloads</div>
      <div class="n"><svg><use href="#f-music"/></svg>Music</div>
      <div class="n"><svg><use href="#f-pic"/></svg>Pictures</div>
      <div class="n"><svg><use href="#f-video"/></svg>Videos</div>
      <div class="n"><svg><use href="#f-win"/></svg>Windows (C:)</div>
      <div class="n"><svg><use href="#f-disk"/></svg>Data (D:)</div>
      <div class="n l1 sp on"><svg><use href="#f-net"/></svg>Network</div>
    </nav>
    <div class="files">
      <div class="fr head"><span>Name<svg class="sort" viewBox="0 0 8 5"><path d="M0 4.500L4 .8l4 3.700" fill="none" stroke="#666"/></svg></span><span>Date modified</span><span>Type</span><span>Size</span></div>
      <div class="fr"><span><svg><use href="#f-folder"/></svg>ComponentsDTP</span><span>9/25/2019 11:26 AM</span><span>File folder</span></div>
      <div class="fr"><span><svg><use href="#f-folder"/></svg>DistributedLoad_DTP</span><span>9/26/2019 12:07 PM</span><span>File folder</span></div>
      <div class="fr"><span><svg><use href="#f-folder"/></svg>ExportDXF</span><span>9/26/2019 2:04 PM</span><span>File folder</span></div>
      <div class="fr"><span><svg><use href="#f-folder"/></svg>InsertAPModel</span><span>9/26/2019 12:33 PM</span><span>File folder</span></div>
      <div class="fr on"><span><svg><use href="#f-folder"/></svg>SaveAsNTL</span><span>9/26/2019 2:04 PM</span><span>File folder</span></div>
    </div>
  </div>
  <div class="e-status"><span class="s1">5 items</span><span class="s2">1 item selected</span><span class="s3">State:<svg viewBox="0 0 16 16"><circle cx="8" cy="8" r="8" fill="#3fae2a"/><path d="M4 8a4 4 0 0 1 7-3M12 8a4 4 0 0 1-7 3" fill="none" stroke="#f3ef6a" stroke-width="2"/></svg>Online</span>
    <div class="vw"><svg class="v1" viewBox="0 0 22 23"><path d="M.5.5h21v22H.5z" fill="#cce8f6" stroke="#26a0da"/><path d="M4.500 5.500h4v12h-4zM4.500 9.500h4M4.500 13.500h4" fill="#fff" stroke="#999"/><path d="M10 7.500h4m2 0h4M10 11.500h4m2 0h4M10 15.500h4m2 0h4" stroke="#777"/><path d="M6 15h1.500v1.500H6z" fill="#e02020"/></svg><svg class="v2" viewBox="0 0 14 11"><path d="M.5.500h13v10H.5z" fill="#fff" stroke="#999"/><path d="M2 2h10v7H2z" fill="#77b5ec"/><path d="M2 6q5-1 10 2v1H2z" fill="#2b6a60"/></svg></div>
  </div>
</div>
<footer class="task small">
  <div class="cell st"><svg><use href="#b-win"/></svg></div><div class="cell st"><svg><use href="#b-cort"/></svg></div><div class="cell st tv"><svg><use href="#b-task"/></svg></div>
  <div class="cell"><svg><use href="#b-edge"/></svg></div><div class="cell"><svg><use href="#b-store"/></svg></div><div class="cell run"><svg><use href="#b-mail"/></svg></div><div class="cell run many"><svg><use href="#b-outlook"/></svg></div><div class="cell run"><svg><use href="#b-teams"/></svg></div><div class="cell run act"><svg><use href="#b-pipe"/></svg></div><div class="cell run"><svg><use href="#b-test"/></svg></div><div class="cell run"><svg><use href="#b-chrome"/></svg></div><div class="cell run many"><svg><use href="#b-expl"/></svg></div><div class="cell run many"><svg><use href="#b-skype"/></svg></div><div class="cell run many"><svg><use href="#b-note"/></svg></div><div class="cell run many"><svg><use href="#b-excel"/></svg></div><div class="cell run many"><svg><use href="#b-ie"/></svg></div><div class="cell run"><svg><use href="#b-people"/></svg></div>
  <div class="clk">2:14 PM<br>9/26/2019</div>
</footer>
</section>
</div>
</body>
</html>
```
FILE: styles.css
```css
* { box-sizing: border-box; }
body { margin: 0; width: 3840px; height: 1080px; overflow: hidden; background: #fff; font: 12px "Open Sans", sans-serif; letter-spacing: -.35px; color: #000; }
svg { display: block; flex: none; }
symbol { overflow: visible; }
svg text { letter-spacing: 0; }
.defs { position: absolute; width: 0; height: 0; }
.desktop { display: flex; }
.monitor { position: relative; width: 1920px; height: 1080px; display: flex; flex-direction: column; overflow: hidden; }
.i16 { width: 16px; height: 16px; }
.i14 { width: 14px; height: 14px; }
.i11 { width: 11px; height: 11px; }
.r90 { transform: rotate(90deg); }
.r180 { transform: rotate(180deg); }
.r270 { transform: rotate(-90deg); }
.flip { transform: scaleX(-1); }

/* AutoPIPE main window */
.app { height: 1030px; background: #bfdbff; display: flex; flex-direction: column; position: relative; }
.app-title { height: 30px; background: #fff; display: flex; align-items: flex-start; }
.qat { margin: 2px 0 0 38px; width: 120px; height: 26px; border: 1px solid #b3bccb; border-left: 0; border-radius: 0 13px 13px 0; background: #eceef1; display: flex; padding: 0 0 0 15px; }
.qat svg, .it svg, .bar svg { overflow: visible; }
.q2 { margin-left: 14px; }
.qat .dd { width: 6px; height: 4px; margin: 9px 8px 0 13px; fill: #5b7bb5; }
.qat-more { width: 8px; height: 8px; margin: 9px 0 0 7px; }
.app-ctl { margin: 7px 24px 0 auto; display: flex; gap: 44px; color: #888; }
.orb { position: absolute; left: 4px; top: 1px; width: 38px; height: 38px; }
.menu { height: 21px; display: flex; font-size: 11.500px; letter-spacing: -.3px; color: #15428b; position: relative; }
.tab { line-height: 23px; white-space: nowrap; }
.tab.on { margin: 1px 0 -1px 48px; width: 42px; text-align: center; background: linear-gradient(#f6faff, #e3eefb); border: 1px solid #8db2e3; border-bottom: 0; border-radius: 3px 3px 0 0; line-height: 20px; height: 22px; z-index: 1; }
.t2 { margin-left: 15px; width: 57px; }
.t3 { width: 145px; }
.menu-bin { width: 16px; height: 14px; margin: 4px 0 0 auto; }
.menu-dd { width: 6px; height: 4px; margin: 9px 2px 0 106px; }
.ribbon { height: 91px; margin-left: 2px; margin-right: 2px; border: 1px solid #8db2e3; border-bottom: 2px solid #8fdde6; border-radius: 3px; background: linear-gradient(#dbe6f4 0, #d0def0 17px, #c7d8ed 18px, #d4e3f3 50px, #e3f4fd 88px); display: flex; gap: 4px; padding: 3px 0 0 2px; }
.grp { height: 84px; border: 1px solid #9ebcdf; border-radius: 3px; display: flex; flex-direction: column; background: linear-gradient(#dee8f5 0, #d3e0f1 14px, #c8d9ee 15px, #dbe8f7 68px); overflow: hidden; }
.items { flex: 1; display: flex; }
.it { display: flex; flex-direction: column; align-items: center; padding-top: 3px; text-align: center; line-height: 13px; font-size: 11.500px; letter-spacing: -.33px; color: #15428b; white-space: nowrap; }
.it svg { width: 32px; height: 32px; margin-bottom: 3px; }
.cap { height: 15px; line-height: 14px; text-align: center; background: #c1d8f0; color: #3e6aaa; font-size: 11.500px; letter-spacing: -.3px; white-space: nowrap; }
.tri { border: 3px solid transparent; border-top: 4px solid #5b7bb5; border-bottom: 0; margin-top: 5px; }
.g-file { width: 179px; } .g-iso { width: 167px; } .g-imp { width: 80px; } .g-mod { width: 72px; } .g-dash { width: 65px; } .g-lic { width: 157px; }
.it.a { width: 46px; } .it.b { width: 40px; } .it.c { width: 42px; } .it.d { width: 48px; } .it.e { width: 112px; } .it.f { width: 50px; } .it.g { width: 82px; } .it.h { width: 68px; }
.it.full { flex: 1; }
.bars { display: flex; flex-direction: column; align-items: flex-start; padding: 2px 0 0 2px; height: 80px; }
.bar { height: 25px; margin-bottom: 1px; display: flex; align-items: center; gap: 5px; border-radius: 2px; background: linear-gradient(#e4efff, #dbe9fd 50%, #c4dbf8); border-bottom: 1px solid #7ba3d9; }
.bar svg { width: 17px; height: 17px; }
.grip { width: 2px; height: 16px; margin: 0 0 0 2px; background: repeating-linear-gradient(#6d8fc8 0 2px, transparent 2px 4px); }
.grip + svg { margin-left: 1px; }
.end { width: 11px; height: 25px; border-radius: 0 3px 3px 0; background: linear-gradient(#bcd3f5, #7a9fd8); margin-left: -1px; position: relative; }
.end::after { content: ""; position: absolute; left: 3px; bottom: 3px; border: 3px solid transparent; border-top: 4px solid #fff; border-bottom: 0; }
.view { height: 764px; border: 1px solid #5a6068; border-bottom: 0; display: flex; background: #f0f0f0; }
.canvas { width: 1898px; height: 763px; border: 3px solid #ff0; background: #fdfdfd; }
.triad { margin: 634px 0 0 2px; }
.vs { flex: 1; display: flex; flex-direction: column; align-items: center; justify-content: space-between; padding: 4px 0 3px; color: #555; position: relative; }
.vs svg:first-child { transform: rotate(180deg); }
.thumb { position: absolute; left: 3px; right: 0; top: 370px; height: 21px; background: #cdcdcd; }
.hs { height: 20px; border: 1px solid #5a6068; border-top: 0; background: #f0f0f0; display: flex; align-items: center; justify-content: space-between; padding: 0 25px 0 1px; color: #555; }
.status { height: 24px; display: flex; align-items: center; background: linear-gradient(#e3f0ff 0, #c9dffb 8px, #aecaf2 9px, #c2dafa); color: #15428b; font-size: 11.500px; padding-left: 9px; border-top: 1px solid #5a8bcc; }
.status-r { margin-left: auto; width: 455px; height: 23px; background: linear-gradient(#b3cff5, #92b7ea 8px, #7ba2dd 9px, #8fb4ea); display: flex; align-items: center; }
.status-r i { width: 1px; height: 15px; background: #dce9fb; margin-left: 92px; }
.status-r i + i { margin-left: 72px; } .status-r i + i + i { margin-left: 48px; } .status-r i + i + i + i { margin-left: 120px; margin-right: 8px; }

/* floating windows */
.win { position: absolute; background: #f0f0f0; border: 1px solid #8a8a8a; box-shadow: 0 3px 14px rgba(0,0,0,.35); font-family: "Liberation Sans", Arial, sans-serif; letter-spacing: 0; }
.win header { background: #fff; height: 38px; display: flex; align-items: center; color: #999; font: 15px "Open Sans", sans-serif; letter-spacing: -.42px; white-space: nowrap; }
.combo { height: 21px; background: #fff; border: 2px solid; border-color: #787878 #f8f8f8 #f8f8f8 #787878; display: flex; align-items: center; padding-left: 2px; white-space: nowrap; overflow: hidden; }
.combo b { margin-left: auto; width: 20px; height: 100%; flex: none; background: #f0f0f0; border: 1px solid; border-color: #f0f0f0 #777 #777 #f0f0f0; display: flex; align-items: center; justify-content: center; }
.combo b::after { content: ""; border: 4px solid transparent; border-top: 4px solid #000; border-bottom: 0; }
.combo.dis { background: #f0f0f0; } .combo.dis b::after { border-top-color: #999; }
.search-win { left: 943px; top: 174px; width: 577px; height: 85px; }
.bin { width: 19px; height: 17px; margin: 0 7px 0 7px; }
.search-win .close { margin: 0 14px 0 auto; }
.sw-body { display: flex; align-items: center; padding: 6px 0 0 8px; font-size: 13px; }
.sw-body label { width: 53px; }
.sw-body .combo { width: 500px; height: 28px; }
.gmo { left: 641px; top: 314px; width: 650px; height: 376px; border-color: #666; box-shadow: 0 4px 20px rgba(0,0,0,.45); }
.gmo header { color: #000; padding-left: 9px; }
.gmo header em { font: 17px "Open Sans", sans-serif; margin-left: auto; width: 10px; }
.gmo header svg { margin: 0 24px 0 44px; }
.form { padding: 6px 0 0 4px; font-size: 11px; }
.row { height: 25px; display: grid; align-items: center; white-space: nowrap; }
.r1 { grid-template-columns: 94px 241px; }
.r3 { grid-template-columns: 94px 151px 16px 94px 151px; }
.r3 label + .fld + label { grid-column: 4; }
.r5 { grid-template-columns: 93px 176px 22px 69px 176px; }
.r5 .combo + label { grid-column: 4; }
.r6 { padding-left: 9px; grid-template-columns: 152px 37px 195px 37px 63px 16px; }
.r7 { padding-left: 6px; grid-template-columns: 124px 55px 21px 174px 16px; }
.r7 .off { grid-column: 4; }
.r8 { padding-left: 6px; grid-template-columns: 195px 176px 22px 69px 152px; }
.r8 .combo + label { grid-column: 4; }
.r9 { grid-template-columns: 159px 80px 16px 57px 80px; }
.r9 .combo + label { grid-column: 4; }
.r11 { grid-template-columns: 208px 24px 20px 139px 36px; }
.r11 .fld + label { grid-column: 4; }
.r12 { grid-template-columns: 147px 92px 19px 72px 92px; }
.r12 .combo + label { grid-column: 4; }
.r5 .combo, .r8 .combo, .r9 .combo, .r12 .combo { margin-top: 2px; }
.r9 .combo { font-size: 12px; letter-spacing: -.5px; padding-left: 1px; }
.r9 .combo b { width: 19px; }
.fld { height: 17px; background: #fff; border: 2px solid; border-color: #787878 #fafafa #fafafa #787878; display: flex; }
.fld.dis { background: #f0f0f0; }
.num { font-size: 12px; align-items: center; justify-content: flex-end; padding-right: 1px; }
.sel { width: 72px; height: 13px; background: #0078d7; margin-left: auto; border-right: 1px solid #e08a3c; }
.chk { width: 15px; height: 15px; border: 2px solid; border-color: #787878 #fafafa #fafafa #787878; }
.off { color: #a0a0a0; }
.btns { display: flex; gap: 8px; justify-content: flex-end; padding-right: 13px; }
.btns button { width: 48px; height: 20px; padding: 0; font: 11px "Liberation Sans", Arial, sans-serif; background: #f0f0f0; border: 1px solid; border-color: #fff #666 #666 #fff; box-shadow: 1px 1px #999; }
.btns .ok { border: 1px solid #555; box-shadow: inset -1px -1px #777; }
.ibeam { position: absolute; left: 261px; top: 48px; width: 9px; height: 20px; }
.rcd { left: 514px; top: 768px; width: 1012px; height: 262px; box-shadow: 0 0 14px rgba(0,0,0,.3); }
.rcd-ic { width: 18px; height: 16px; margin: 0 7px 0 9px; }
.rcd-min { margin-left: auto; }
.maxbox { width: 11px; height: 11px; border: 1px solid #ddd; margin: 0 47px; }
.rcd-x { margin-right: 22px; }
.sheet { margin: 13px 7px 0 14px; height: 203px; border: 2px solid; border-color: #666 #777 #777 #666; display: flex; flex-direction: column; }
.sheet-main { height: 178px; display: flex; justify-content: space-between; }
.cols { display: grid; grid-template-columns: 22px 55px 58px 106px 76px 83px 52px 52px 52px 59px 52px 62px; height: 66px; border-bottom: 2px solid #111; font: bold 12.500px/16px "Liberation Sans", Arial, sans-serif; text-align: center; white-space: nowrap; }
.cols div { border-right: 1px solid #222; border-left: 1px solid #fff; display: flex; align-items: center; justify-content: center; }
.cols div:nth-child(6) { padding-top: 16px; }
.svs { width: 20px; display: flex; flex-direction: column; gap: 2px; }
.btn { display: flex; align-items: center; justify-content: center; background: #f0f0f0; border: 1px solid; border-color: #fff #666 #666 #fff; box-shadow: inset -1px -1px #aaa; height: 18px; flex: none; }
.svs .th { flex: 1; }
s { border: 4px solid transparent; }
.up { border-bottom: 5px solid #000; border-top: 0; } .dn { border-top: 5px solid #000; border-bottom: 0; }
.lf { border-right: 5px solid #000; border-left: 0; } .rt { border-left: 5px solid #000; border-right: 0; }
.nav.g .lf { border-right-color: #777; }
.nav { width: 21px; }
.nav u { width: 1px; height: 9px; background: #444; margin: 0 1px; }
.tabs { height: 21px; display: flex; }
.tabs .btn { height: 21px; }
.tabtxt { width: 785px; margin-right: 3px; display: flex; overflow: hidden; font: 16.400px/21px "Liberation Sans", Arial, sans-serif; white-space: nowrap; border-top: 1px solid #111; border-right: 1px solid #111; }
.tabtxt span, .tabtxt b { flex: none; }
.tabtxt b { font-size: 16px; background: #fff; margin-top: -1px; }
.sl { width: 18px; height: 21px; }
.sl.first { width: 10px; background: #fff; margin-top: -1px; }
.w1 { width: 135px; } .w2 { width: 112px; } .w3 { width: 64px; } .w4 { width: 38px; } .w5 { width: 128px; } .w6 { width: 57px; } .w7 { width: 26px; } .w8 { width: 37px; }
.tabs .h1 { width: 20px; } .tabs .h2 { width: 54px; }

/* test recorder overlay */
.recorder { position: absolute; left: 1808px; top: 24px; width: 103px; height: 41px; border: 1px solid #aaa; border-radius: 4px; background: #f0f0f0; display: flex; align-items: center; padding-left: 3px; }
.rec-main { width: 32px; height: 32px; border: 2px solid #10324a; }
.rule { width: 1px; height: 35px; background: #999; margin: 0 10px 0 4px; }
.rec-p { width: 42px; height: 16px; }
.hint { position: absolute; left: 1688px; top: 68px; width: 224px; height: 55px; border: 1px solid #666; background: #fff; padding: 4px 4px 0; font-size: 12.200px; letter-spacing: 0; line-height: 16px; display: flex; flex-direction: column; white-space: nowrap; }
.hint span { padding: 0 3px; }
.prog { height: 11px; border: 1px solid #bcbcbc; background: #e6e6e6; margin-bottom: 1px; }
.hint .job { text-align: right; padding-right: 2px; }
.tip { position: absolute; left: 210px; top: -8px; width: 8px; height: 8px; }

/* taskbars */
.task { display: flex; background: #1c2726; color: #fff; }
.big { height: 50px; background: linear-gradient(90deg, #1c2726 1100px, #1a1c1e 1250px, #180f10 1400px, #1b1412 1520px, #1c2624 1620px); }
.cell { width: 62px; height: 100%; display: flex; align-items: center; justify-content: center; position: relative; }
.cell svg { width: 30px; height: 30px; }
.big .st { width: 60px; } .big .st svg { width: 21px; height: 21px; }
.big .tv { width: 63px; padding-right: 4px; }
.big .tv svg { width: 22px; height: 22px; }
.run::after { content: ""; position: absolute; left: 6px; right: 6px; bottom: 0; height: 3px; background: #76b9ed; }
.many::after { background: linear-gradient(90deg, #76b9ed 80%, #4d7fa8 80%); }
.act { background: #4a5453; }
.act::after { left: 0; right: 0; }
.srch { width: 430px; background: #f2f2f2; display: flex; align-items: center; padding: 0 17px 0 10px; color: #444; font-size: 17px; letter-spacing: -.25px; border-top: 1px solid #ccc; }
.ct { width: 30px; height: 30px; color: #111; margin-right: 11px; }
.mic { width: 16px; height: 22px; margin-left: auto; }
.tray { margin-left: auto; display: flex; align-items: center; width: 310px; }
.tray svg { width: 20px; height: 20px; }
.tray .k1 { margin-left: 26px; width: 18px; } .tray .k2 { margin-left: 11px; } .tray .k3 { margin-left: 11px; } .tray .k4 { margin-left: 9px; }
.tray .clk { width: 72px; margin-left: 11px; }
.clk { font-size: 15px; line-height: 23px; letter-spacing: -.4px; text-align: center; white-space: nowrap; }
.tray .ac { width: 30px; height: 32px; margin: 0 0 0 20px; }
.peek { width: 1px; height: 50px; background: #6a7373; margin-left: auto; margin-right: 5px; }
.small { height: 40px; background: #1c2726; }
.small .cell { width: 49px; } .small .cell svg { width: 24px; height: 24px; }
.small .st { width: 48px; } .small .st svg { width: 17px; height: 17px; } .small .tv { margin-right: 2px; }
.small .run::after { left: 4px; right: 4px; height: 2px; }
.small .act::after { left: 0; right: 0; }
.small .clk { width: 60px; margin: 2px 2px 0 auto; font-size: 12px; line-height: 18px; letter-spacing: -.55px; }

/* file explorer */
.exp { height: 1040px; background: #fff; display: flex; flex-direction: column; }
.e-title { height: 23px; display: flex; align-items: center; color: #999; }
.bar1 { width: 1px; height: 12px; background: #777; margin: 0 8px 0 7px; }
.bar1.k { margin: 0 7px; }
.i8 { width: 8px; height: 8px; }
.e-chk { margin-right: 6px; } .e-fol { margin-right: 7px; }
.e-ctl { margin: -4px 20px 0 auto; display: flex; gap: 35px; color: #888; }
.e-menu { height: 24px; border-bottom: 1px solid #d9d9d9; display: flex; line-height: 24px; color: #333; }
.e-menu b { width: 56px; height: 23px; background: #0063b1; color: #fff; font-weight: normal; text-align: center; }
.m1 { margin-left: 14px; width: 59px; } .m2 { width: 58px; }
.mc { margin: 5px 15px 0 auto; color: #999; }
.e-menu em { width: 14px; height: 14px; border-radius: 50%; background: #0b78d4; color: #fff; font: bold 10px/14px "Open Sans", sans-serif; text-align: center; margin: 4px 4px 0 0; }
.e-addr { height: 35px; display: flex; align-items: flex-start; padding: 6px 12px 0 0; }
.nv { width: 84px; height: 16px; margin: 3px 0 0; }
.nv { width: 84px; }
.nv-up { width: 12px; height: 16px; margin: 3px 8px 0 2px; }
.crumbs { width: 1588px; height: 22px; border: 1px solid #d9d9d9; display: flex; align-items: center; white-space: nowrap; }
.crumbs .i16 { margin-left: 1px; }
.crumbs i { width: 23px; height: 10px; display: flex; align-items: center; justify-content: center; }
.crumbs i::after { content: ""; width: 5px; height: 5px; border: solid #555; border-width: 1.500px 1.500px 0 0; transform: rotate(45deg); margin-left: -3px; }
.crumbs span { flex: none; }
.crumbs .c1 { width: 45px; } .crumbs .c2 { width: 54px; } .crumbs .c3 { width: 17px; } .crumbs .c4 { width: 80px; } .crumbs .c5 { width: 69px; } .crumbs .c6 { width: 22px; } .crumbs .c7 { width: 49px; } .crumbs .c8 { width: 106px; } .crumbs .c9 { width: 75px; } .crumbs .c10 { width: 73px; }
.cd { margin-left: auto; color: #555; }
.rf { width: 17px; height: 20px; }
.e-search { margin-left: auto; width: 203px; height: 22px; border: 1px solid #d9d9d9; display: flex; align-items: center; justify-content: space-between; padding: 0 7px 0 8px; color: #6d6d6d; }
.e-search svg { width: 14px; height: 14px; }
.e-main { height: 935px; display: flex; }
nav { width: 309px; height: 935px; border-right: 1px solid #f0f0f0; padding-top: 16px; }
.n { height: 24px; width: 306px; display: flex; align-items: center; padding-left: 32px; white-space: nowrap; }
.n svg { width: 16px; height: 16px; margin-right: 5px; }
.n.l1 { padding-left: 24px; }
.n .pin { width: 11px; height: 12px; margin: 0 3px 0 auto; }
.n.sp { margin-top: 8px; }
.n.on, .fr.on { background: #d9d9d9; }
.files { padding: 0 0 0 15px; }
.fr { width: 574px; height: 21px; display: grid; grid-template-columns: 264px 120px 120px 70px; align-items: center; color: #6d6d6d; white-space: nowrap; letter-spacing: -.45px; }
.fr span:first-child { color: #000; display: flex; align-items: center; padding-left: 3px; letter-spacing: -.35px; }
.fr svg { width: 16px; height: 16px; margin-right: 5px; }
.fr.head { height: 25px; margin-bottom: 7px; color: #4c607a; letter-spacing: -.35px; position: relative; width: 579px; grid-template-columns: 257px 120px 120px 82px; align-items: stretch; line-height: 26px; }
.fr.head span { border-right: 1px solid #e3e3e3; padding-left: 7px; }
.fr.head span:first-child { color: #4c607a; padding-left: 3px; }
.fr .sort { position: absolute; left: 123px; top: 1px; width: 8px; height: 5px; margin: 0; }
.e-status { height: 23px; display: flex; align-items: center; color: #1e395b; padding-left: 14px; line-height: 14px; white-space: nowrap; }
.e-status > span { border-right: 1px solid #eee; }
.s1 { width: 49px; margin-right: 10px; } .s2 { width: 91px; margin-right: 9px; } .s3 { width: 93px; display: flex; align-items: center; }
.s3 svg { width: 16px; height: 16px; margin: 0 3px 0 2px; }
.vw { margin: 0 8px 0 auto; display: flex; align-items: center; gap: 4px; }
.v1 { width: 22px; height: 23px; } .v2 { width: 14px; height: 11px; }
```
